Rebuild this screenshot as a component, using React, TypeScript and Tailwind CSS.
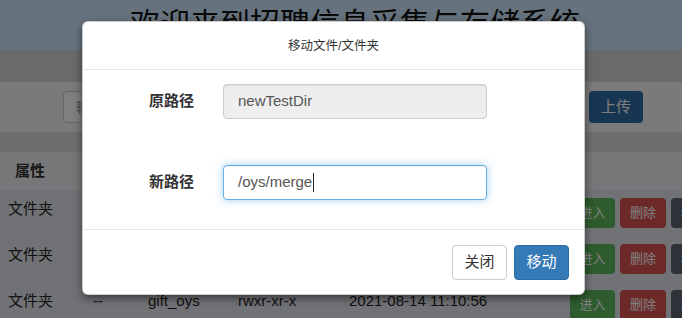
const font = "font-['Liberation_Sans','Noto_Sans_CJK_SC',sans-serif]";

const rows = [
  { kind: "文件夹", size: "--", name: "newTestDir", perm: "rwxr-xr-x", time: "2021-08-14 11:12:03" },
  { kind: "文件夹", size: "--", name: "merge", perm: "rwxr-xr-x", time: "2021-08-14 11:11:20" },
  { kind: "文件夹", size: "--", name: "gift_oys", perm: "rwxr-xr-x", time: "2021-08-14 11:10:56" },
];

function Page() {
  return (
    <div className="flex flex-col text-[#333]">
      {/* 标题栏 */}
      <div className="h-[50px] bg-[#cce6fc] pl-[28px] pt-[7px] text-center">
        <h1 className="text-[30px] leading-[34px] font-normal text-[#111]">
          欢迎来到招聘信息采集与存储系统
        </h1>
      </div>
      <div className="h-[32px] bg-[#d4d4d8]" />

      {/* 工具栏：搜索 + 上传 */}
      <div className="flex h-[50px] items-center bg-[#f5f5f7] pl-[63px] pr-[39px]">
        <div className="flex h-[32px] w-[300px] items-center rounded-[4px] border border-[#ccc] bg-white px-[12px] text-[14px] text-[#999]">
          输入文件名搜索
        </div>
        <div className="flex-1" />
        <button className="h-[32px] w-[54px] rounded-[4px] bg-[#2e6da4] text-[15px] text-white">
          上传
        </button>
      </div>
      <div className="h-[20px] bg-[#dcdce0]" />

      {/* 表格 */}
      <div className="grid h-[38px] grid-cols-[80px_55px_90px_111px_221px] items-center bg-[#efeff2] pl-[15px] text-[15px] font-bold">
        <span>属性</span>
        <span>大小</span>
        <span>名称</span>
        <span>权限</span>
        <span>修改时间</span>
      </div>
      {rows.map((r) => (
        <div
          key={r.name}
          className="grid h-[46px] grid-cols-[85px_55px_90px_111px_221px_1fr] items-start bg-[#e2e5ec] pl-[8px] text-[15px] leading-[22px] text-[#222]"
        >
          <span className="pt-[8px]">{r.kind}</span>
          <span className="pt-[8px]">{r.size}</span>
          <span className="pt-[8px]">{r.name}</span>
          <span className="pt-[8px]">{r.perm}</span>
          <span className="pt-[8px]">{r.time}</span>
          <span className="flex gap-[5px] pt-[8px]">
            <button className="h-[30px] w-[45px] rounded-[4px] bg-[#5cb85c] text-[13px] text-white">进入</button>
            <button className="h-[30px] w-[46px] rounded-[4px] bg-[#d9534f] text-[13px] text-white">删除</button>
            <button className="h-[30px] w-[46px] rounded-[4px] bg-[#5a6470] text-[13px] text-white">移动</button>
          </span>
        </div>
      ))}
    </div>
  );
}

function MoveDialog() {
  return (
    <div className="absolute left-[82px] top-[21px] w-[503px] rounded-[6px] border border-black/20 bg-white shadow-[0_3px_9px_rgba(0,0,0,0.5)]">
      <div className="flex h-[48px] items-center justify-center border-b border-[#e5e5e5] pt-[2px] text-[12.5px] text-[#333]">
        移动文件/文件夹
      </div>

      <div className="flex flex-col gap-[46px] pb-[29px] pt-[14px]">
        <div className="grid grid-cols-[140px_264px] items-center">
          <label className="pr-[29px] text-right text-[15px] font-bold text-[#333]">原路径</label>
          <div className="flex h-[35px] items-center rounded-[4px] border border-[#ccc] bg-[#eee] px-[14px] text-[15px] text-[#555] shadow-[inset_0_1px_1px_rgba(0,0,0,0.075)]">
            newTestDir
          </div>
        </div>
        <div className="grid grid-cols-[140px_264px] items-center">
          <label className="pr-[29px] text-right text-[15px] font-bold text-[#333]">新路径</label>
          <div className="flex h-[35px] items-center rounded-[4px] border border-[#66afe9] bg-white px-[14px] text-[15px] text-[#555] shadow-[inset_0_1px_1px_rgba(0,0,0,0.075),0_0_8px_rgba(102,175,233,0.6)]">
            /oys/merge
            <span className="ml-px h-[19px] w-px bg-[#222]" />
          </div>
        </div>
      </div>

      <div className="flex justify-end gap-[7px] border-t border-[#e5e5e5] px-[15px] pb-[14px] pt-[15px]">
        <button className="h-[35px] w-[55px] rounded-[4px] border border-[#ccc] bg-white text-[15px] text-[#333]">
          关闭
        </button>
        <button className="h-[35px] w-[55px] rounded-[4px] border border-[#2e6da4] bg-[#337ab7] text-[15px] text-white">
          移动
        </button>
      </div>
    </div>
  );
}

export default function App() {
  return (
    <div className={`relative h-[318px] w-[682px] overflow-hidden ${font}`}>
      <Page />
      {/* 遮罩层 */}
      <div className="absolute inset-0 bg-black/50" />
      <MoveDialog />
    </div>
  );
}
